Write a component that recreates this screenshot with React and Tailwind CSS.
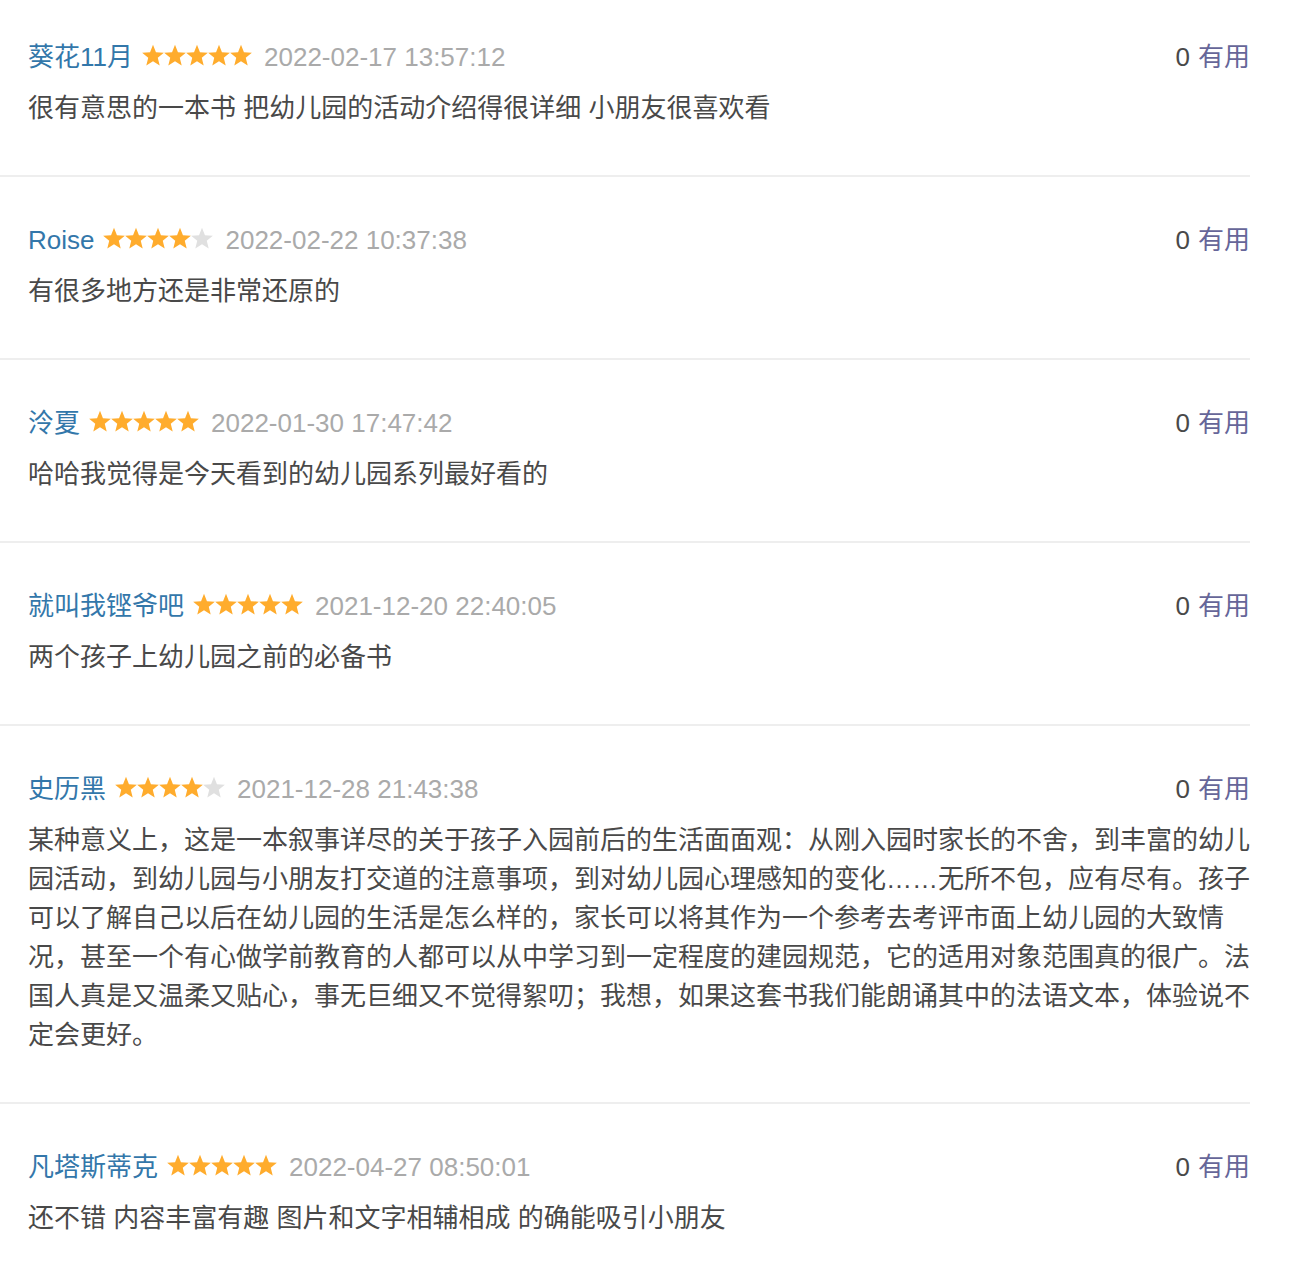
import React from 'react';

const reviews = [
  {
    name: '葵花11月',
    stars: 5,
    time: '2022-02-17 13:57:12',
    text: '很有意思的一本书 把幼儿园的活动介绍得很详细 小朋友很喜欢看',
  },
  {
    name: 'Roise',
    stars: 4,
    time: '2022-02-22 10:37:38',
    text: '有很多地方还是非常还原的',
  },
  {
    name: '泠夏',
    stars: 5,
    time: '2022-01-30 17:47:42',
    text: '哈哈我觉得是今天看到的幼儿园系列最好看的',
  },
  {
    name: '就叫我铿爷吧',
    stars: 5,
    time: '2021-12-20 22:40:05',
    text: '两个孩子上幼儿园之前的必备书',
  },
  {
    name: '史历黑',
    stars: 4,
    time: '2021-12-28 21:43:38',
    text: '某种意义上，这是一本叙事详尽的关于孩子入园前后的生活面面观：从刚入园时家长的不舍，到丰富的幼儿园活动，到幼儿园与小朋友打交道的注意事项，到对幼儿园心理感知的变化……无所不包，应有尽有。孩子可以了解自己以后在幼儿园的生活是怎么样的，家长可以将其作为一个参考去考评市面上幼儿园的大致情况，甚至一个有心做学前教育的人都可以从中学习到一定程度的建园规范，它的适用对象范围真的很广。法国人真是又温柔又贴心，事无巨细又不觉得絮叨；我想，如果这套书我们能朗诵其中的法语文本，体验说不定会更好。',
  },
  {
    name: '凡塔斯蒂克',
    stars: 5,
    time: '2022-04-27 08:50:01',
    text: '还不错 内容丰富有趣 图片和文字相辅相成 的确能吸引小朋友',
  },
];

const Star = ({ on }) => (
  <svg width="22" height="23" viewBox="0 0 22 23" className="block">
    <polygon
      points="11,0.8 13.94,8.16 21.84,8.68 15.76,13.75 17.7,21.42 11,17.2 4.3,21.42 6.24,13.75 0.16,8.68 8.06,8.16"
      fill={on ? '#ffac2d' : '#e0e0e0'}
    />
  </svg>
);

const Stars = ({ count }) => (
  <span className="flex items-center">
    {[0, 1, 2, 3, 4].map((i) => (
      <Star key={i} on={i < count} />
    ))}
  </span>
);

export default function App() {
  return (
    <div
      className="w-[1250px] bg-white text-[26px] leading-[39px]"
      style={{ fontFamily: '"Liberation Sans", "Noto Sans CJK SC", sans-serif' }}
    >
      {reviews.map((r, idx) => (
        <div
          key={idx}
          className={`pl-[28px] pb-[47px] ${idx === 0 ? 'pt-[38px]' : 'pt-[44px]'} ${
            idx < reviews.length - 1 ? 'border-b-2 border-[#eeeeee]' : ''
          }`}
        >
          <div className="flex items-center justify-between h-[39px]">
            <div className="flex items-center">
              <span className="text-[#3377aa]">{r.name}</span>
              <span className="ml-[9px] mb-[4px]">
                <Stars count={r.stars} />
              </span>
              <span className="ml-[12px] text-[#aaaaaa]">{r.time}</span>
            </div>
            <div className="flex items-center">
              <span className="text-[#494949]">0</span>
              <span className="ml-[8px] text-[#666699]">有用</span>
            </div>
          </div>
          <p className="mt-[12px] text-[#494949] break-all">{r.text}</p>
        </div>
      ))}
    </div>
  );
}
